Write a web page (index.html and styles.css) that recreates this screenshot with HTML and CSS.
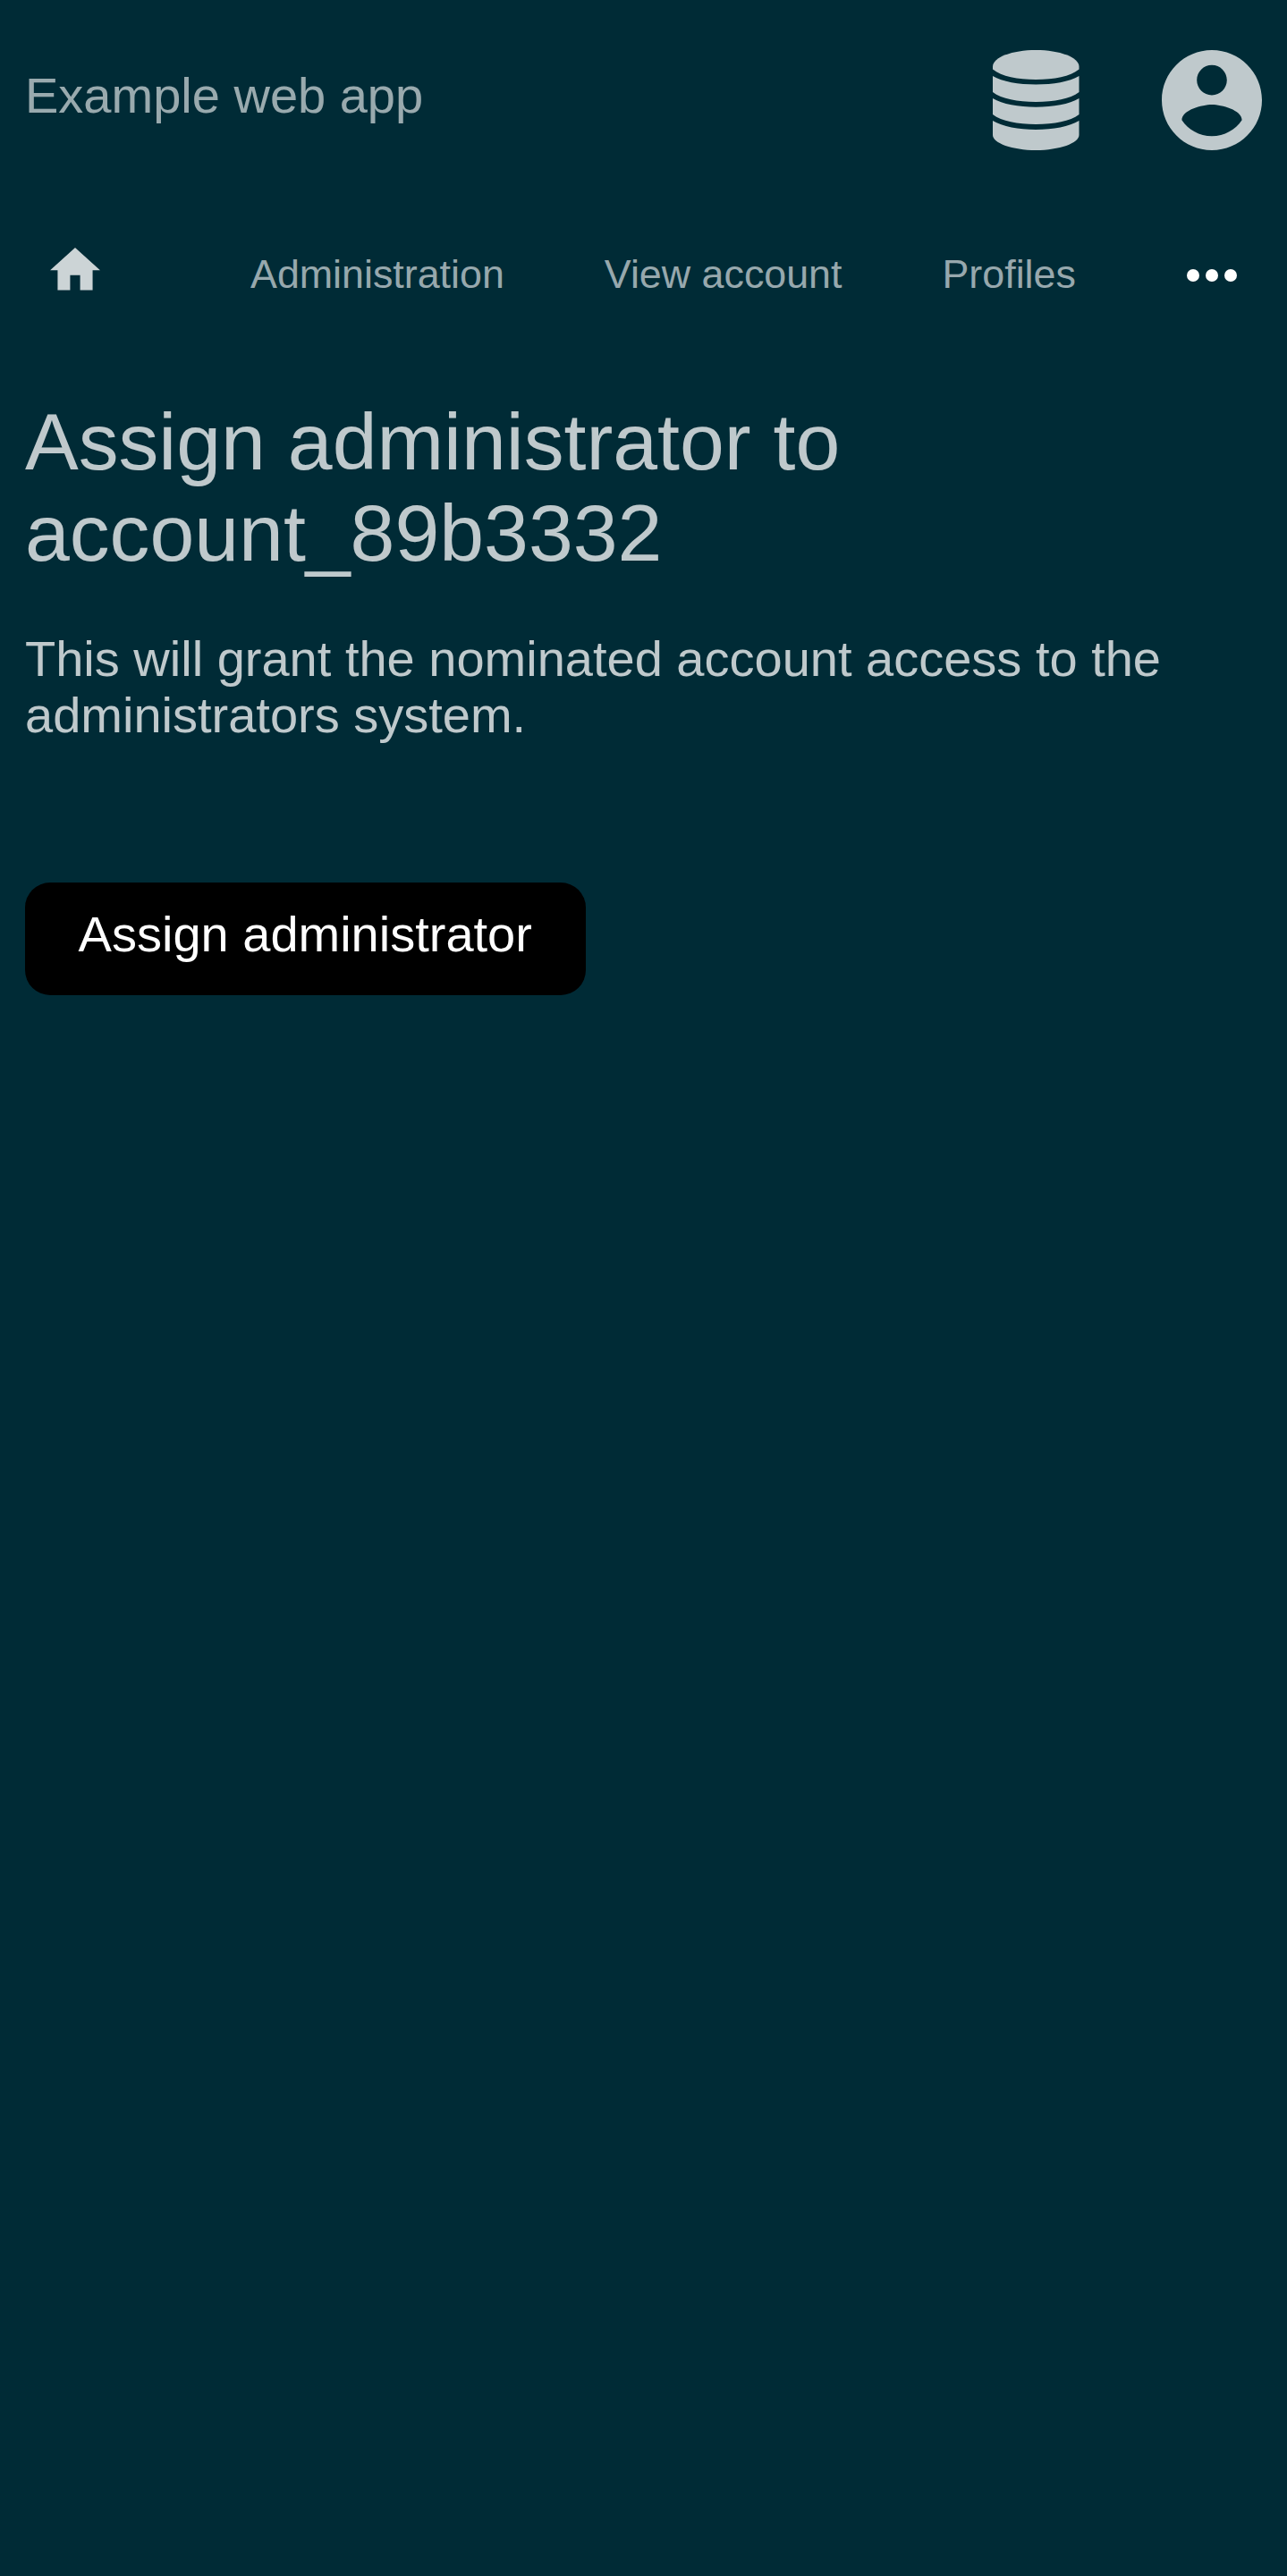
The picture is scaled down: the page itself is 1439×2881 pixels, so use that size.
FILE: index.html
```html
<!DOCTYPE html>
<html lang="en">
<head>
<meta charset="utf-8">
<title>Assign administrator</title>
<link rel="stylesheet" href="styles.css">
</head>
<body>
<header class="topbar">
  <a class="brand">Example web app</a>
  <div class="actions">
    <svg class="icon-db" viewBox="0 0 97 112" preserveAspectRatio="none" aria-label="Database">
      <path d="M0 18.500C0 8 22 0 48.500 0S97 8 97 18.500V21.500C87 29.500 69 33 48.500 33S10 29.500 0 21.500Z"/>
      <path d="M0 29C11 35.500 29 38.500 48.500 38.500S86 35.500 97 29V47C87 54.500 69 58 48.500 58S10 54.500 0 47Z"/>
      <path d="M0 54C11 60.500 29 63.700 48.500 63.700S86 60.500 97 54V72C87 79.500 69 83 48.500 83S10 79.500 0 72Z"/>
      <path d="M0 79C11 85.500 29 89 48.500 89S86 85.500 97 79V95C97 104 75 112 48.500 112S0 104 0 95Z"/>
    </svg>
    <svg class="icon-account" viewBox="2 2 20 20" aria-label="Account">
      <path d="M12 2C6.480 2 2 6.480 2 12s4.480 10 10 10 10-4.480 10-10S17.520 2 12 2zm0 3c1.660 0 3 1.340 3 3s-1.340 3-3 3-3-1.340-3-3 1.340-3 3-3zm0 14.200c-2.500 0-4.710-1.280-6-3.220.03-1.990 4-3.080 6-3.080 1.990 0 5.970 1.090 6 3.080-1.290 1.940-3.500 3.220-6 3.220z"/>
    </svg>
  </div>
</header>
<nav class="nav">
  <svg class="icon-home" viewBox="2 3 20 17" aria-label="Home"><path d="M10 20v-6h4v6h5v-8h3L12 3 2 12h3v8z"/></svg>
  <a class="nav-link">Administration</a>
  <a class="nav-link">View account</a>
  <a class="nav-link">Profiles</a>
  <svg class="icon-more" viewBox="0 0 16 4" aria-label="More"><circle cx="2" cy="2" r="2"/><circle cx="8" cy="2" r="2"/><circle cx="14" cy="2" r="2"/></svg>
</nav>
<main class="content">
  <h1 class="title">Assign administrator to account_89b3332</h1>
  <p class="description">This will grant the nominated account access to the administrators system.</p>
  <button class="submit" type="button">Assign administrator</button>
</main>
</body>
</html>
```
FILE: styles.css
```css
* { box-sizing: border-box; }
html { background: #002b36; }
body {
  margin: 0;
  width: 1438.5px;
  min-height: 100vh;
  color: rgba(255, 255, 255, .75);
  font: 56px/63px "Liberation Sans", Arial, sans-serif;
}
svg { display: block; fill: currentColor; flex: none; overflow: visible; }
.topbar {
  display: flex;
  align-items: flex-start;
  justify-content: space-between;
  height: 224px;
  padding: 56px 28px 0;
}
.brand { margin-top: 19px; color: rgba(255, 255, 255, .6); }
.actions { display: flex; gap: 92px; }
.icon-db { width: 96.5px; height: 112px; }
.icon-account { width: 112px; height: 112px; }
.nav {
  display: flex;
  align-items: flex-start;
  height: 196px;
  padding: 53px 56px 0;
  font-size: 44.8px;
  line-height: 52px;
}
.icon-home { width: 56px; height: 47.5px; margin-right: 168px; color: rgba(255, 255, 255, .8); }
.nav-link { margin: 3px 112px 0 0; color: rgba(255, 255, 255, .6); }
.icon-more { width: 56px; height: 14px; margin: 24px 0 0 auto; color: #fff; }
.content { padding: 23px 28px; }
.title { margin: 0; font-size: 89.6px; line-height: 102px; font-weight: 400; }
.description { margin: 58px 0 0; }
.submit {
  display: block;
  margin-top: 156px;
  width: 626.5px;
  padding: 26px 0 37px;
  border: 0;
  border-radius: 28px;
  background: #000;
  color: #fff;
  font: inherit;
}
```
